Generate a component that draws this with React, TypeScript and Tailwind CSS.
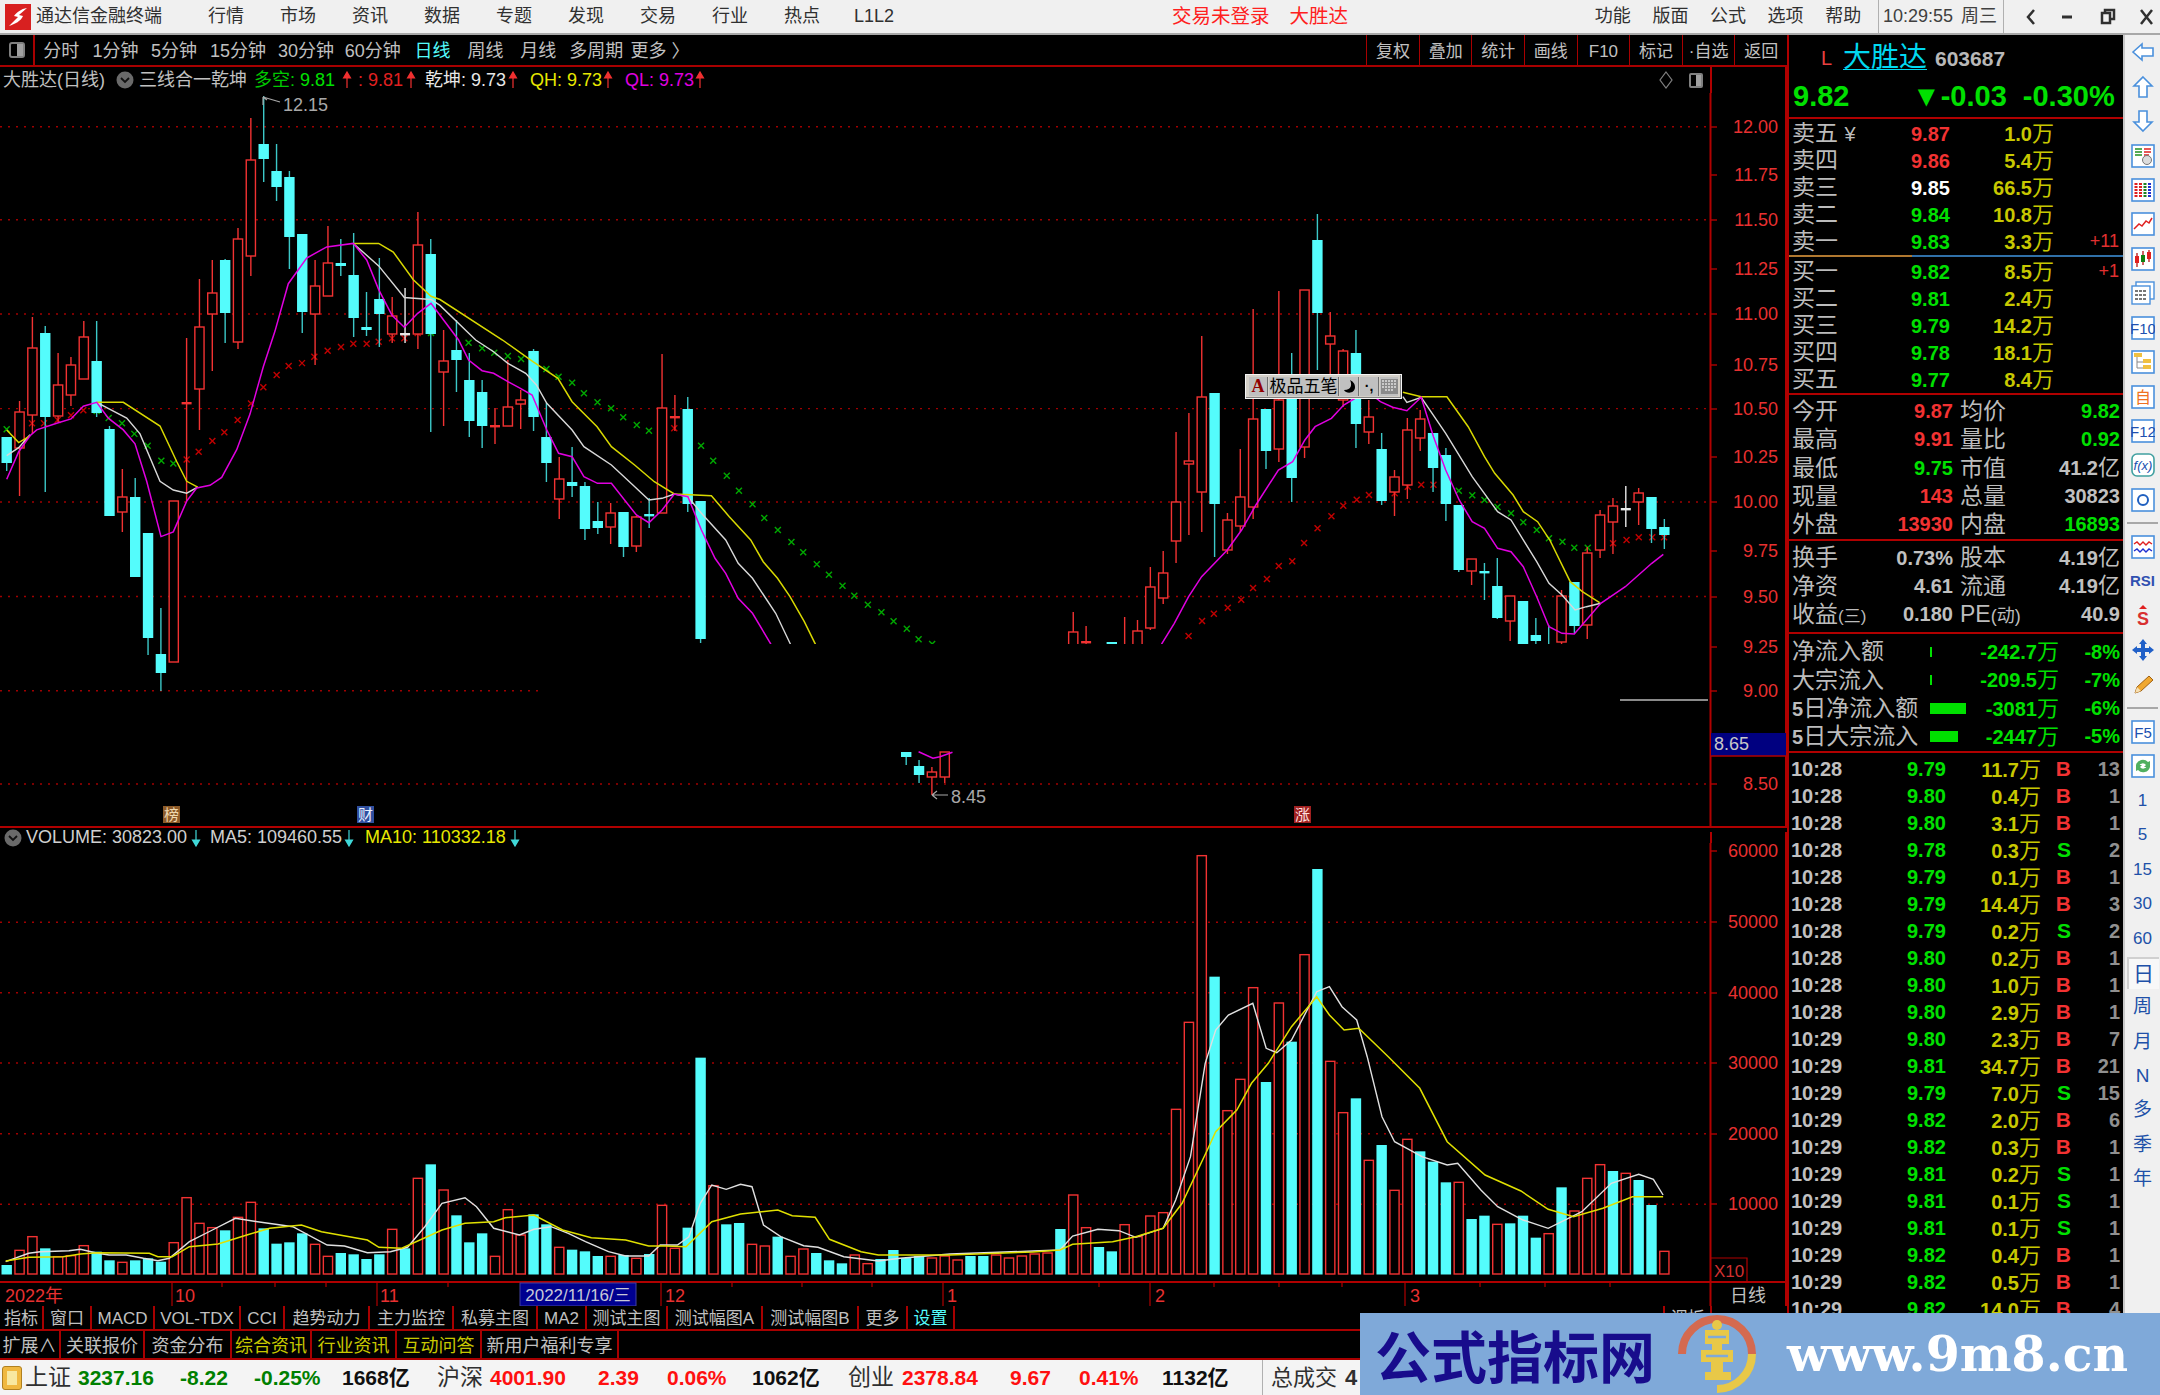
import React from "react";

// crop coordinates -> page coordinates
type Map = (x: number, y: number) => [number, number];
const zA: Map = (x, y) => [x / 3, 90 + y / 2.53];
const zB: Map = (x, y) => [440 + x / 2.8, 340 + y / 3];
const zC: Map = (x, y) => [1060 + x / 2.45, 200 + y / 3];
const zD: Map = (x, y) => [x / 1.742, 1040 + y / 3];
const zE: Map = (x, y) => [1060 + x / 2.376, 840 + y / 3];

const line = (...parts: [Map, number[]][]) =>
  parts
    .flatMap(([m, raw]) => {
      const out: string[] = [];
      for (let i = 0; i < raw.length; i += 2) {
        const [x, y] = m(raw[i], raw[i + 1]);
        out.push(`${x.toFixed(1)},${y.toFixed(1)}`);
      }
      return out;
    })
    .join(" ");

const cx = (i: number) => 6.7 + 12.85 * i;

// i, colour (c cyan, r red, w white), body top, body bottom, wick top, wick bottom
const candles: [number, string, number, number, number, number][] = [
  [0, "c", 437, 463, 437, 471], [1, "r", 412, 448, 401, 496], [2, "r", 348, 415, 317, 434], [3, "c", 333, 417, 326, 492],
  [4, "r", 385, 416, 353, 422], [5, "r", 365, 395, 357, 406], [6, "r", 337, 379, 321, 379], [7, "c", 361, 413, 321, 417],
  [8, "c", 429, 516, 426, 516], [9, "r", 497, 512, 469, 532], [10, "c", 497, 577, 478, 577], [11, "c", 533, 638, 533, 655],
  [12, "c", 654, 673, 608, 691], [13, "r", 501, 662, 501, 662], [14, "r", 403, 404, 338, 501], [15, "r", 327, 389, 279, 430],
  [16, "r", 293, 314, 260, 371], [17, "c", 260, 313, 259, 343], [18, "r", 239, 342, 228, 349], [19, "r", 160, 256, 118, 276],
  [20, "c", 144, 159, 96, 182], [21, "c", 171, 187, 144, 201], [22, "c", 177, 237, 171, 269], [23, "c", 234, 312, 234, 333],
  [24, "r", 286, 314, 260, 365], [25, "r", 263, 296, 226, 296], [26, "c", 263, 266, 239, 276], [27, "c", 275, 318, 233, 337],
  [28, "c", 327, 330, 292, 336], [29, "c", 299, 314, 258, 347], [30, "r", 316, 334, 297, 343], [31, "w", 334, 335, 288, 343],
  [32, "r", 245, 334, 212, 349], [33, "c", 254, 334, 239, 432], [34, "r", 361, 372, 330, 426], [35, "c", 350, 360, 320, 392],
  [36, "c", 380, 421, 353, 437], [37, "c", 392, 426, 380, 448], [38, "r", 426, 427, 408, 444], [39, "r", 407, 426, 360, 426],
  [40, "r", 400, 404, 390, 429], [41, "c", 351, 417, 349, 431], [42, "c", 437, 463, 403, 482], [43, "r", 479, 499, 457, 519],
  [44, "c", 482, 486, 447, 497], [45, "c", 486, 529, 482, 540], [46, "c", 521, 528, 502, 534], [47, "r", 513, 527, 503, 544],
  [48, "c", 512, 547, 512, 557], [49, "r", 517, 546, 516, 552], [50, "c", 515, 516, 498, 528], [51, "r", 408, 513, 354, 513],
  [52, "r", 417, 418, 395, 431], [53, "c", 409, 504, 397, 512], [54, "c", 501, 639, 501, 643],
  [70, "c", 752, 757, 752, 765], [71, "c", 766, 775, 760, 783], [72, "r", 772, 777, 767, 795], [73, "r", 752, 777, 752, 783],
  [83, "r", 632, 660, 612, 660], [84, "r", 642, 643, 626, 660], [86, "c", 642, 660, 642, 660], [87, "r", 660, 661, 617, 660],
  [88, "r", 631, 660, 620, 660], [89, "r", 587, 628, 567, 630], [90, "r", 573, 598, 551, 604], [91, "r", 502, 541, 432, 563],
  [92, "r", 461, 464, 413, 535], [93, "r", 397, 492, 336, 532], [94, "c", 393, 504, 393, 557], [95, "r", 520, 550, 513, 554],
  [96, "r", 497, 526, 449, 532], [97, "r", 419, 507, 309, 519], [98, "c", 409, 451, 409, 469], [99, "r", 400, 449, 291, 462],
  [100, "c", 390, 478, 353, 502], [101, "r", 290, 447, 290, 458], [102, "c", 240, 313, 214, 370], [103, "r", 336, 344, 312, 390],
  [104, "r", 351, 400, 349, 407], [105, "c", 353, 424, 330, 448], [106, "r", 417, 432, 400, 444], [107, "c", 449, 501, 433, 505],
  [108, "r", 477, 492, 470, 516], [109, "r", 430, 485, 418, 499], [110, "r", 419, 438, 410, 451], [111, "c", 433, 468, 433, 492],
  [112, "c", 455, 504, 448, 521], [113, "c", 505, 570, 505, 572], [114, "r", 559, 571, 559, 585], [115, "c", 572, 574, 563, 600],
  [116, "c", 586, 618, 558, 619], [117, "r", 596, 621, 596, 641], [118, "c", 601, 660, 601, 660], [119, "c", 635, 641, 618, 660],
  [120, "c", 660, 661, 625, 660], [121, "r", 596, 642, 590, 660], [122, "c", 582, 626, 582, 633], [123, "r", 553, 625, 547, 639],
  [124, "r", 515, 550, 510, 558], [125, "r", 506, 522, 498, 554], [126, "w", 509, 510, 486, 527], [127, "r", 493, 502, 488, 525],
  [128, "c", 497, 529, 497, 543], [129, "c", 527, 535, 519, 549],
];

const crossRed: [Map, number[]][] = [
  [zA, [56, 855, 96, 843, 132, 843, 173, 835, 213, 823, 250, 810, 560, 935, 596, 915, 637, 888, 673, 866, 713, 835, 753, 793, 790, 752, 830, 721, 866, 698, 906, 691, 943, 675, 983, 660, 1023, 650, 1060, 642, 1100, 642, 1136, 637, 1176, 628, 1213, 628, 1253, 615]],
  [zB, [622, 268, 656, 265]],
  [zC, [315, 1308, 348, 1263, 377, 1241, 411, 1223, 444, 1199, 473, 1164, 507, 1137, 536, 1098, 569, 1084, 598, 1029, 631, 985, 665, 949, 694, 917, 727, 899, 757, 885, 820, 880, 852, 860, 885, 854, 915, 854, 1326, 1040, 1355, 1030, 1388, 1020, 1418, 1012, 1451, 1012, 1480, 1012]],
];
const crossGreen: [Map, number[]][] = [
  [zA, [20, 858, 290, 812, 326, 830, 366, 843, 403, 870, 443, 900, 484, 938, 520, 945, 1293, 615]],
  [zB, [80, 8, 118, 25, 152, 38, 190, 48, 227, 57, 262, 68, 298, 87, 332, 110, 370, 128, 403, 160, 441, 187, 479, 205, 513, 232, 551, 255, 585, 272, 694, 277, 731, 317, 765, 362, 803, 407, 837, 452, 875, 493, 908, 534, 946, 570, 984, 606, 1017, 637, 1055, 673, 1089, 704, 1127, 737, 1160, 767, 1198, 794, 1236, 817, 1270, 844, 1307, 866, 1340, 898, 1378, 912]],
  [zC, [789, 885, 947, 854, 977, 872, 1010, 886, 1040, 900, 1072, 921, 1105, 940, 1135, 967, 1168, 990, 1198, 1015, 1231, 1025, 1260, 1043, 1293, 1043]],
];

const magenta = [
  line([zA, [20, 985, 56, 915, 90, 875, 110, 860, 170, 843, 213, 832, 250, 800, 290, 790, 325, 830, 370, 860, 405, 895, 440, 990, 483, 1130, 520, 1118, 560, 1040, 590, 1007, 630, 1000, 665, 980, 710, 910, 750, 820, 790, 700, 825, 610, 865, 490, 920, 425, 980, 397, 1060, 388, 1100, 430, 1136, 505, 1176, 570, 1213, 600, 1253, 565, 1293, 540, 1320, 570]],
    [zB, [52, 0, 80, 60, 118, 92, 150, 100, 190, 125, 225, 145, 258, 165, 299, 270, 332, 340, 370, 350, 403, 410, 441, 430, 480, 430, 550, 525, 585, 548, 622, 510, 656, 462, 694, 470, 732, 570, 770, 655, 800, 700, 835, 775, 875, 820, 925, 910, 960, 980]]),
  line([zB, [1340, 1235, 1380, 1255, 1400, 1250, 1435, 1237]]),
  line([zC, [225, 1390, 250, 1330, 280, 1270, 315, 1190, 347, 1130, 410, 1050, 445, 990, 480, 915, 535, 810, 570, 785, 600, 720, 625, 680, 665, 655, 695, 615, 720, 597, 750, 570, 785, 605, 815, 622, 850, 632, 885, 592, 915, 710, 945, 810, 978, 900, 1010, 965, 1040, 985, 1072, 1045, 1105, 1055, 1135, 1100, 1168, 1190, 1198, 1280, 1230, 1300, 1260, 1302, 1325, 1210, 1385, 1160, 1450, 1090, 1478, 1063]]),
];
const white = [
  line([zA, [20, 925, 56, 905, 90, 872]]),
  line([zA, [290, 790, 380, 830, 420, 870, 480, 990, 520, 1012, 560, 1020, 593, 1005]]),
  line([zA, [1060, 388, 1136, 445, 1213, 525, 1293, 530, 1320, 545]],
    [zB, [100, 0, 150, 35, 190, 70, 240, 100, 270, 135, 299, 190, 370, 270, 403, 320, 480, 375, 540, 435, 585, 480, 622, 475, 656, 462, 694, 470, 732, 520, 800, 600, 835, 670, 875, 715, 940, 820, 980, 910, 1010, 980]]),
  line([zC, [840, 590, 850, 607, 885, 592, 945, 700, 1010, 830, 1072, 935, 1105, 960, 1168, 1085, 1198, 1150, 1230, 1185, 1262, 1230, 1290, 1220, 1325, 1210]]),
];
const yellow = [
  line([zA, [20, 860, 56, 892, 90, 875]]),
  line([zA, [290, 790, 370, 790, 480, 850, 530, 940, 560, 990, 593, 1005]]),
  line([zA, [1060, 388, 1136, 388, 1180, 410, 1240, 480, 1293, 522, 1320, 530]],
    [zB, [175, 0, 260, 65, 330, 115, 370, 185, 440, 260, 480, 320, 545, 375, 600, 425, 656, 462, 760, 467, 810, 530, 870, 600, 905, 665, 945, 715, 980, 770, 1020, 845, 1050, 910, 1080, 980]]),
  line([zC, [840, 577, 885, 590, 948, 590, 1000, 680, 1040, 770, 1065, 820, 1110, 885, 1135, 935, 1170, 965, 1200, 1020, 1250, 1145, 1280, 1175, 1322, 1208]]),
];

const volTopsA = [675, 631, 590, 625, 650, 647, 617, 635, 661, 667, 661, 655, 665, 608, 473, 550, 563, 571, 532, 487, 565, 611, 607, 580, 613, 649, 639, 643, 657, 643, 568, 625, 415, 373, 450, 526, 607, 580, 649, 509, 585, 523, 553, 622, 629, 634, 648, 649, 645, 655, 642, 496, 625, 563, 53, 437, 553, 549, 613, 618, 590, 649, 627, 639, 661, 670, 645, 671, 657, 630];
const volTopsB = [1258, 1256, 1258, 1256, 1260, 1256, 1256, 1255, 1258, 1256, 1254, 1253, 1229];
const volTopsC = [1065, 1163, 1221, 1234, 1154, 1190, 1128, 1118, 808, 547, 47, 410, 812, 718, 443, 726, 489, 605, 344, 87, 664, 818, 775, 961, 915, 1051, 898, 934, 965, 1027, 1027, 1137, 1127, 1153, 1150, 1127, 1193, 1181, 1042, 1113, 1015, 974, 993, 1000, 1020, 1095, 1234];
const volTops = [...volTopsA.map((v) => 1040 + v / 3), ...volTopsB, ...volTopsC.map((v) => 840 + v / 3)];
const volKinds =
  "crrcrrrccrcccrrrrcrrccccrrccccrcrcrcccrrrccrcccrcrcrrccrccrrcrrcccrrcc" +
  "ccrrrccrrrrrc" +
  "rrccrrrrrrrcrrrcrcrcrrcrcrrcccrccrcccrcrrrcrcc";

const volWhite = line(
  [zD, [10, 665, 50, 640, 70, 635, 120, 632, 140, 628, 170, 640, 190, 645, 220, 645, 250, 655, 275, 662, 295, 655, 330, 605, 370, 570, 410, 535, 440, 543, 480, 553, 510, 560, 570, 615, 600, 618, 640, 638, 680, 635, 710, 622, 740, 560, 770, 490, 810, 473, 830, 500, 860, 565, 905, 585, 930, 568, 960, 560, 990, 580, 1020, 605, 1060, 635, 1090, 648, 1130, 648, 1150, 615, 1180, 615, 1200, 590, 1220, 490, 1240, 435, 1265, 448, 1290, 433, 1310, 440, 1330, 555, 1360, 590, 1400, 617, 1425, 622, 1470, 650, 1530, 663, 1568, 655]],
  [(x, y) => [x, y], [950, 1254, 1033, 1251]],
  [zE, [0, 1230, 30, 1188, 90, 1168, 140, 1172, 180, 1192, 245, 1165, 275, 1080, 310, 950, 345, 670, 370, 570, 400, 525, 458, 490, 490, 625, 515, 638, 550, 600, 610, 455, 640, 440, 670, 500, 705, 540, 730, 650, 765, 830, 795, 905, 860, 950, 920, 975, 945, 970, 1000, 1050, 1040, 1100, 1100, 1140, 1160, 1165, 1240, 1115, 1310, 1030, 1375, 1003, 1410, 1018, 1433, 1065]]
);
const volYellow = line(
  [zD, [10, 663, 50, 652, 110, 650, 140, 642, 170, 638, 260, 640, 275, 650, 300, 650, 330, 620, 380, 612, 430, 585, 470, 565, 525, 555, 560, 575, 640, 600, 660, 622, 700, 625, 770, 570, 810, 550, 860, 545, 880, 533, 930, 525, 980, 570, 1030, 593, 1090, 600, 1130, 618, 1160, 618, 1195, 620, 1240, 545, 1290, 522, 1355, 510, 1380, 527, 1420, 532, 1445, 598, 1500, 635, 1530, 645, 1568, 645]],
  [(x, y) => [x, y], [950, 1255, 1033, 1252]],
  [zE, [0, 1230, 30, 1213, 125, 1205, 180, 1190, 245, 1165, 290, 1090, 350, 930, 370, 875, 420, 810, 455, 730, 495, 670, 550, 560, 610, 470, 640, 525, 675, 570, 710, 565, 780, 650, 855, 745, 920, 905, 1010, 1005, 1095, 1053, 1160, 1108, 1220, 1130, 1290, 1105, 1360, 1070, 1433, 1070]]
);

const CYAN = "#54fcfc";
const RED = "#f23232";

const Crosses = ({ sets, color }: { sets: [Map, number[]][]; color: string }) => (
  <g stroke={color} strokeWidth="1.4" fill="none">
    {sets.flatMap(([m, raw]) => {
      const out = [];
      for (let i = 0; i < raw.length; i += 2) {
        const [x, y] = m(raw[i], raw[i + 1]);
        out.push(<path key={`${x}-${y}`} d={`M${x - 3} ${y - 3}L${x + 3} ${y + 3}M${x + 3} ${y - 3}L${x - 3} ${y + 3}`} />);
      }
      return out;
    })}
  </g>
);

const Candle = ({ c }: { c: (typeof candles)[number] }) => {
  const [i, kind, top, bottom, wt, wb] = c;
  const x = cx(i);
  const stroke = kind === "c" ? "#3cc8c8" : kind === "w" ? "#e8e8e8" : RED;
  const doji = bottom - top < 3;
  return (
    <g>
      <line x1={x} x2={x} y1={wt} y2={wb} stroke={stroke} strokeWidth="1.4" />
      {doji ? (
        <rect x={x - 5} y={top - 1} width="10" height="2.4" fill={kind === "c" ? CYAN : stroke} />
      ) : kind === "c" ? (
        <rect x={x - 5.2} y={top} width="10.4" height={bottom - top} fill={CYAN} />
      ) : (
        <rect x={x - 4.6} y={top} width="9.2" height={bottom - top} fill="#000" stroke={stroke} strokeWidth="1.4" />
      )}
    </g>
  );
};

const MainChart = () => {
  const grid = [126.8, 219.7, 314, 408.6, 502, 596.5, 690.8, 784];
  const labels: [string, number][] = [["12.00", 127], ["11.75", 175], ["11.50", 220], ["11.25", 269], ["11.00", 314], ["10.75", 365], ["10.50", 409], ["10.25", 457], ["10.00", 502], ["9.75", 551], ["9.50", 597], ["9.25", 647], ["9.00", 691], ["8.50", 784]];
  return (
    <svg width="1787" height="733" viewBox="0 93 1787 733" className="block">
      {grid.map((y) => (
        <line key={y} x1="0" x2="1710" y1={y} y2={y} stroke="#a00000" strokeWidth="1.4" strokeDasharray="2 6" />
      ))}
      <Crosses sets={crossRed} color="#c00000" />
      <Crosses sets={crossGreen} color="#00a800" />
      {candles.map((c) => <Candle key={c[0]} c={c} />)}
      {white.map((p, i) => <polyline key={i} points={p} fill="none" stroke="#d8d8d8" strokeWidth="1.4" />)}
      {yellow.map((p, i) => <polyline key={i} points={p} fill="none" stroke="#d8d800" strokeWidth="1.5" />)}
      {magenta.map((p, i) => <polyline key={i} points={p} fill="none" stroke="#e000e0" strokeWidth="1.5" />)}
      {/* the blacked out band in the reference */}
      <rect x="538" y="644" width="1172" height="106" fill="#000" />
      <line x1="1620" x2="1708" y1="700" y2="700" stroke="#b8b8b8" strokeWidth="1.4" />
      <path d="M263 105V97M263 97L280 102M263 97l4 3" stroke="#a8a8a8" strokeWidth="1.2" fill="none" />
      <text x="283" y="111" fontSize="18" fill="#a8a8a8">12.15</text>
      <path d="M932 795H948M932 795l5-4M932 795l5 4" stroke="#a8a8a8" strokeWidth="1.2" fill="none" />
      <text x="951" y="803" fontSize="18" fill="#a8a8a8">8.45</text>
      <rect x="163" y="806" width="17" height="17" fill="#8c5a28" />
      <text x="164" y="820" fontSize="15" fill="#f0d8b0">榜</text>
      <rect x="357" y="806" width="17" height="17" fill="#2f4f9f" />
      <text x="358" y="820" fontSize="15" fill="#e8f0ff">财</text>
      <rect x="1294" y="806" width="17" height="17" fill="#a02020" />
      <text x="1295" y="820" fontSize="15" fill="#ffe0e0">涨</text>
      <line x1="1710.5" x2="1710.5" y1="93" y2="826" stroke="#b00000" strokeWidth="2" />
      <line x1="1786" x2="1786" y1="93" y2="826" stroke="#b00000" strokeWidth="2" />
      {labels.map(([t, y]) => (
        <g key={t}>
          <line x1="1711" x2="1717" y1={y} y2={y} stroke="#b00000" strokeWidth="1.4" />
          <text x="1778" y={y + 6} fontSize="18" fill="#e83030" textAnchor="end">{t}</text>
        </g>
      ))}
      <rect x="1711" y="733" width="75" height="23" fill="#000080" />
      <line x1="1711" x2="1786" y1="756" y2="756" stroke="#b00000" strokeWidth="1.4" />
      <text x="1714" y="750" fontSize="18" fill="#c8c8c8">8.65</text>
    </svg>
  );
};

const VolumeChart = () => {
  const grid = [922.3, 992.7, 1063, 1133.7, 1204.3];
  const labels: [string, number][] = [["60000", 851], ["50000", 922], ["40000", 993], ["30000", 1063], ["20000", 1134], ["10000", 1204]];
  const months: [string, number][] = [["2022年", 5], ["10", 175], ["11", 380], ["12", 665], ["1", 947], ["2", 1155], ["3", 1410]];
  const minor = [222, 275, 326, 448, 732, 802, 872, 1099, 1214, 1279, 1342, 1480, 1545, 1610];
  return (
    <svg width="1787" height="463" viewBox="0 843 1787 463" className="block">
      {grid.map((y) => (
        <line key={y} x1="0" x2="1710" y1={y} y2={y} stroke="#a00000" strokeWidth="1.4" strokeDasharray="2 6" />
      ))}
      {volTops.map((top, i) => {
        const x = cx(i);
        return volKinds[i] === "c" ? (
          <rect key={i} x={x - 5.2} y={top} width="10.4" height={1274.5 - top} fill={CYAN} />
        ) : (
          <rect key={i} x={x - 4.6} y={top} width="9.2" height={1274 - top} fill="#000" stroke={RED} strokeWidth="1.4" />
        );
      })}
      <polyline points={volWhite} fill="none" stroke="#e0e0e0" strokeWidth="1.4" />
      <polyline points={volYellow} fill="none" stroke="#e0e000" strokeWidth="1.5" />
      <line x1="0" x2="1787" y1="1282" y2="1282" stroke="#b00000" strokeWidth="2" />
      <line x1="1710.5" x2="1710.5" y1="843" y2="1306" stroke="#b00000" strokeWidth="2" />
      <line x1="1786" x2="1786" y1="843" y2="1306" stroke="#b00000" strokeWidth="2" />
      {labels.map(([t, y]) => (
        <g key={t}>
          <line x1="1711" x2="1717" y1={y} y2={y} stroke="#b00000" strokeWidth="1.4" />
          <text x="1778" y={y + 6} fontSize="18" fill="#e83030" textAnchor="end">{t}</text>
        </g>
      ))}
      <path d="M1711 1258H1747V1282" fill="none" stroke="#b00000" strokeWidth="1.2" />
      <text x="1714" y="1277" fontSize="17" fill="#d03030">X10</text>
      {minor.map((x) => <line key={x} x1={x} x2={x} y1="1282" y2="1287" stroke="#b00000" strokeWidth="1.2" />)}
      {[172, 377, 661, 943, 1150, 1405].map((x) => <line key={x} x1={x} x2={x} y1="1282" y2="1306" stroke="#b00000" strokeWidth="1.2" />)}
      {months.map(([t, x]) => <text key={t} x={x} y="1302" fontSize="18" fill="#e83030">{t}</text>)}
      <rect x="520" y="1283" width="116" height="23" fill="#000090" stroke="#4040a0" />
      <text x="578" y="1301" fontSize="17" fill="#c8c8d8" textAnchor="middle">2022/11/16/三</text>
      <text x="1748" y="1302" fontSize="18" fill="#c0c0c0" textAnchor="middle">日线</text>
    </svg>
  );
};

const UpArrow = () => (
  <svg width="10" height="18" viewBox="0 0 10 18" className="shrink-0">
    <path d="M5 17V2M1.5 7L5 1l3.500 6z" stroke="#f03030" fill="#f03030" strokeWidth="1.2" />
  </svg>
);
const DownArrow = () => (
  <svg width="10" height="18" viewBox="0 0 10 18" className="shrink-0">
    <path d="M5 1V16M1.500 11L5 17l3.500-6z" stroke="#40d8d8" fill="#40d8d8" strokeWidth="1.2" />
  </svg>
);
const ChevronDot = () => (
  <svg width="18" height="18" viewBox="0 0 18 18" className="shrink-0">
    <circle cx="9" cy="9" r="8.500" fill="#6a6a6a" />
    <path d="M5 7l4 4 4-4" stroke="#111" strokeWidth="1.800" fill="none" />
  </svg>
);

const Tool = ({ w, cls, children }: { w: string; cls?: string; children: React.ReactNode }) => (
  <div className={`${w} shrink-0 text-center whitespace-nowrap ${cls ?? "text-[#c0c0c0]"}`}>{children}</div>
);

const Toolbar = () => (
  <div className="h-[32px] flex items-center border-b-2 border-[#a80000] text-[18px] shrink-0">
    <div className="w-[35px] h-full border-r-2 border-[#a80000] flex items-center justify-center shrink-0">
      <div className="w-[16px] h-[16px] rounded-[3px] border-2 border-[#808080] flex justify-end">
        <div className="w-[6px] bg-[#a0a0a0]" />
      </div>
    </div>
    <Tool w="w-[52.5px] pt-[3px]">分时</Tool>
    <Tool w="w-[56px] pt-[3px]">1分钟</Tool>
    <Tool w="w-[61px] pt-[3px]">5分钟</Tool>
    <Tool w="w-[67px] pt-[3px]">15分钟</Tool>
    <Tool w="w-[69px] pt-[3px]">30分钟</Tool>
    <Tool w="w-[64.500px] pt-[3px]">60分钟</Tool>
    <Tool w="w-[55px] pt-[3px]" cls="text-[#54fcfc]">日线</Tool>
    <Tool w="w-[51px] pt-[3px]">周线</Tool>
    <Tool w="w-[54.500px] pt-[3px]">月线</Tool>
    <Tool w="w-[61.500px] pt-[3px]">多周期</Tool>
    <Tool w="w-[66px] pt-[3px]">更多 〉</Tool>
    <div className="ml-auto flex h-full">
      {["复权", "叠加", "统计", "画线", "F10", "标记", "·自选", "返回"].map((t) => (
        <div key={t} className="w-[52.600px] h-full border-l border-[#a80000] flex items-center justify-center text-[#c0c0c0] text-[17px] pt-[3px]">{t}</div>
      ))}
    </div>
  </div>
);

const ChartHeader = () => (
  <div className="h-[26px] flex items-center text-[18px] text-[#c0c0c0] shrink-0 whitespace-nowrap">
    <div className="w-[116px] pl-[3px] shrink-0">大胜达(日线)</div>
    <ChevronDot />
    <div className="w-[120px] pl-[5px] shrink-0">三线合一乾坤</div>
    <div className="w-[88px] text-[#00c800] shrink-0">多空: <span className="text-[#00e000]">9.81</span></div>
    <UpArrow />
    <div className="w-[54px] pl-[6px] text-[#e02020] shrink-0">: 9.81</div>
    <UpArrow />
    <div className="w-[92px] pl-[9px] text-[#e8e8e8] shrink-0">乾坤: 9.73</div>
    <UpArrow />
    <div className="w-[85px] pl-[12px] text-[#e8e800] shrink-0">QH: 9.73</div>
    <UpArrow />
    <div className="w-[82px] pl-[12px] text-[#e000e0] shrink-0">QL: 9.73</div>
    <UpArrow />
    <div className="ml-auto w-[51px] flex items-center gap-[16px] shrink-0">
      <svg width="14" height="18" viewBox="0 0 14 18" className="shrink-0"><path d="M7 1L13 9 7 17 1 9z" fill="none" stroke="#808080" strokeWidth="1.200" /></svg>
      <div className="w-[14px] h-[15px] rounded-[2px] border-2 border-[#808080] flex justify-end shrink-0"><div className="w-[5px] bg-[#a0a0a0]" /></div>
    </div>
    <div className="w-[77px] h-full border-l-2 border-r-2 border-[#b00000] shrink-0" />
  </div>
);

const VolumeHeader = () => (
  <div className="h-[17px] flex items-center text-[18px] whitespace-nowrap shrink-0 border-t-2 border-[#b00000] pl-[4px] pt-[4px]">
    <div className="w-[22px] shrink-0"><ChevronDot /></div>
    <div className="w-[165px] text-[#d0d0d0] shrink-0">VOLUME: 30823.00</div>
    <DownArrow />
    <div className="w-[143px] pl-[9px] text-[#d0d0d0] shrink-0">MA5: 109460.55</div>
    <DownArrow />
    <div className="w-[156px] pl-[11px] text-[#e8e800] shrink-0">MA10: 110332.18</div>
    <DownArrow />
    <div className="ml-auto w-[77px] h-full border-l-2 border-r-2 border-[#b00000] shrink-0" />
  </div>
);

const ImeBar = () => (
  <div className="absolute left-[1245px] top-[281px] w-[157px] h-[25px] bg-[#d4d0c8] border border-[#f4f4f4] flex items-center gap-[1px] px-[3px] py-[2px] shadow-[inset_-1px_-1px_0_#808080]">
    <div className="w-[19px] h-full bg-[#c0c0c0] border-r border-[#707070] flex items-center justify-center text-[#900000] font-bold text-[18px] [font-family:'Liberation_Serif',serif]">A</div>
    <div className="w-[70px] h-full bg-[#c0c0c0] border-r border-[#707070] flex items-center justify-center text-black text-[17px]">极品五笔</div>
    <div className="w-[19px] h-full bg-[#c0c0c0] border-r border-[#707070] flex items-center justify-center">
      <svg width="13" height="14" viewBox="0 0 13 14"><path d="M7 0C9 4 9 10 1 10 3 14 12 14 12 7 12 3 9 1 7 0z" fill="#000" /></svg>
    </div>
    <div className="w-[19px] h-full bg-[#c0c0c0] border-r border-[#707070] flex items-center justify-center text-black text-[14px] font-bold">·,</div>
    <div className="flex-1 h-full bg-[#c0c0c0] flex items-center justify-center">
      <svg width="17" height="15" viewBox="0 0 17 15"><rect width="17" height="15" fill="#8a8a8a" /><path d="M1 2H16M1 5H16M1 8H16M4 11H13" stroke="#e0e0e0" strokeWidth="1.500" strokeDasharray="2 1" /></svg>
    </div>
  </div>
);

const TabCell = ({ w, cls, children }: { w: string; cls?: string; children: React.ReactNode }) => (
  <div className={`${w} h-full border-r-2 border-[#a80000] flex items-center justify-center shrink-0 whitespace-nowrap pt-[3px] ${cls ?? "text-[#c0c0c0]"}`}>{children}</div>
);

const Tabs = () => (
  <>
    <div className="h-[25px] flex border-b-2 border-[#a80000] text-[17px] shrink-0 overflow-hidden">
      <TabCell w="w-[44px]">指标</TabCell>
      <TabCell w="w-[48px]">窗口</TabCell>
      <TabCell w="w-[63px]">MACD</TabCell>
      <TabCell w="w-[86px]">VOL-TDX</TabCell>
      <TabCell w="w-[44px]">CCI</TabCell>
      <TabCell w="w-[85px]">趋势动力</TabCell>
      <TabCell w="w-[84px]">主力监控</TabCell>
      <TabCell w="w-[84px]">私募主图</TabCell>
      <TabCell w="w-[49px]">MA2</TabCell>
      <TabCell w="w-[81px]">测试主图</TabCell>
      <TabCell w="w-[95px]">测试幅图A</TabCell>
      <TabCell w="w-[96px]">测试幅图B</TabCell>
      <TabCell w="w-[49px]">更多</TabCell>
      <TabCell w="w-[47px]" cls="text-[#54fcfc]">设置</TabCell>
      <div className="w-[710px] h-full shrink-0 border-r-2 border-[#a80000]" />
      <TabCell w="w-[47px]">调板</TabCell>
      <div className="flex-1" />
    </div>
    <div className="h-[29px] flex border-b-2 border-[#a80000] text-[18px] shrink-0">
      <TabCell w="w-[61px]">扩展∧</TabCell>
      <TabCell w="w-[84px]">关联报价</TabCell>
      <TabCell w="w-[87px]">资金分布</TabCell>
      <TabCell w="w-[80px]" cls="text-[#c8c800]">综合资讯</TabCell>
      <TabCell w="w-[85px]" cls="text-[#c8c800]">行业资讯</TabCell>
      <TabCell w="w-[85px]" cls="text-[#c8c800]">互动问答</TabCell>
      <TabCell w="w-[137px]">新用户福利专享</TabCell>
    </div>
  </>
);

const Label = ({ children }: { children: React.ReactNode }) => <span className="text-[23px] text-[#bcbcbc] whitespace-nowrap">{children}</span>;
const Wan = ({ children }: { children: React.ReactNode }) => (
  <span className="font-bold text-[20px]">{children}<span className="text-[22px] font-normal">万</span></span>
);

const priceColor = (p: number) => (p > 9.85 ? "text-[#f23232]" : p < 9.85 ? "text-[#00e000]" : "text-white");

const QuoteRow = ({ label, price, vol, extra }: { label: React.ReactNode; price: number; vol: string; extra?: string }) => (
  <div className="h-[27px] flex items-center">
    <div className="w-[122px] pl-[3px] shrink-0"><Label>{label}</Label></div>
    <div className={`w-[42px] font-bold text-[20px] shrink-0 ${priceColor(price)}`}>{price.toFixed(2)}</div>
    <div className="w-[101px] text-right text-[#c8c800] shrink-0"><Wan>{vol}</Wan></div>
    <div className="w-[65px] text-right text-[#e03030] text-[18px] shrink-0">{extra}</div>
  </div>
);

const StatRow = ({ a, av, ac, b, bv, bc }: { a: React.ReactNode; av: string; ac: string; b: React.ReactNode; bv: React.ReactNode; bc: string }) => (
  <div className="h-[28.300px] flex items-center">
    <div className="w-[171px] pl-[3px] pr-[7px] flex justify-between items-center shrink-0">
      <Label>{a}</Label>
      <span className={`font-bold text-[20px] ${ac}`}>{av}</span>
    </div>
    <div className="w-[160px] flex justify-between items-center shrink-0">
      <Label>{b}</Label>
      <span className={`font-bold text-[20px] ${bc}`}>{bv}</span>
    </div>
  </div>
);

const G = "text-[#00e000]";
const R = "text-[#f23232]";
const W = "text-[#c0c0c0]";

const FlowRow = ({ label, bar, val, pct }: { label: React.ReactNode; bar: string; val: string; pct: string }) => (
  <div className="h-[28.300px] flex items-center">
    <div className="w-[141px] pl-[3px] shrink-0 overflow-hidden">{label}</div>
    <div className="w-[44px] shrink-0 flex items-center"><div className={`${bar} bg-[#00e000]`} /></div>
    <div className="w-[85px] text-right text-[#00e000] shrink-0 whitespace-nowrap"><span className="font-bold text-[20px]">{val}<span className="text-[22px] font-normal">万</span></span></div>
    <div className="w-[61px] text-right text-[#00e000] font-bold text-[20px] shrink-0">{pct}</div>
  </div>
);

const trades: [string, number, string, string, number][] = [
  ["10:28", 9.79, "11.7", "B", 13], ["10:28", 9.8, "0.4", "B", 1], ["10:28", 9.8, "3.1", "B", 1], ["10:28", 9.78, "0.3", "S", 2],
  ["10:28", 9.79, "0.1", "B", 1], ["10:28", 9.79, "14.4", "B", 3], ["10:28", 9.79, "0.2", "S", 2], ["10:28", 9.8, "0.2", "B", 1],
  ["10:28", 9.8, "1.0", "B", 1], ["10:28", 9.8, "2.9", "B", 1], ["10:29", 9.8, "2.3", "B", 7], ["10:29", 9.81, "34.7", "B", 21],
  ["10:29", 9.79, "7.0", "S", 15], ["10:29", 9.82, "2.0", "B", 6], ["10:29", 9.82, "0.3", "B", 1], ["10:29", 9.81, "0.2", "S", 1],
  ["10:29", 9.81, "0.1", "S", 1], ["10:29", 9.81, "0.1", "S", 1], ["10:29", 9.82, "0.4", "B", 1], ["10:29", 9.82, "0.5", "B", 1],
  ["10:29", 9.82, "14.0", "B", 4],
];

const Panel = () => (
  <div className="w-[336px] h-full border-l-2 border-[#b00000] shrink-0 flex flex-col overflow-hidden">
    <div className="h-[84px] border-b-2 border-[#b00000] shrink-0">
      <div className="h-[41px] flex items-end pl-[32px] whitespace-nowrap">
        <span className="text-[#e84040] text-[20px] w-[22px] mb-[3px]">L</span>
        <span className="text-[#00d8f0] text-[28px] leading-[36px] underline underline-offset-2 decoration-1">大胜达</span>
        <span className="text-[#b8b8b8] text-[21px] font-bold ml-[8px] mb-[2px]">603687</span>
      </div>
      <div className="h-[41px] flex items-center pl-[4px] pt-[1px] text-[#00e000] font-bold text-[29px] whitespace-nowrap">
        <span className="w-[119px]">9.82</span>
        <span>▼-0.03</span>
        <span className="ml-[16px]">-0.30%</span>
      </div>
    </div>
    <div className="pt-[1px] shrink-0">
      <QuoteRow label={<>卖五 <span className="text-[20px]">¥</span></>} price={9.87} vol="1.0" />
      <QuoteRow label="卖四" price={9.86} vol="5.4" />
      <QuoteRow label="卖三" price={9.85} vol="66.5" />
      <QuoteRow label="卖二" price={9.84} vol="10.8" />
      <QuoteRow label="卖一" price={9.83} vol="3.3" extra="+11" />
    </div>
    <div className="h-[2px] flex shrink-0"><div className="w-[123px] bg-[#b07830]" /><div className="flex-1 bg-[#3070a8]" /></div>
    <div className="border-b-2 border-[#b00000] pt-[1px] shrink-0">
      <QuoteRow label="买一" price={9.82} vol="8.5" extra="+1" />
      <QuoteRow label="买二" price={9.81} vol="2.4" />
      <QuoteRow label="买三" price={9.79} vol="14.2" />
      <QuoteRow label="买四" price={9.78} vol="18.1" />
      <QuoteRow label="买五" price={9.77} vol="8.4" />
    </div>
    <div className="border-b-2 border-[#b00000] pt-[2px] pb-[1px] shrink-0">
      <StatRow a="今开" av="9.87" ac={R} b="均价" bv="9.82" bc={G} />
      <StatRow a="最高" av="9.91" ac={R} b="量比" bv="0.92" bc={G} />
      <StatRow a="最低" av="9.75" ac={G} b="市值" bv={<>41.2<span className="text-[22px] font-normal">亿</span></>} bc={W} />
      <StatRow a="现量" av="143" ac={R} b="总量" bv="30823" bc={W} />
      <StatRow a="外盘" av="13930" ac={R} b="内盘" bv="16893" bc={G} />
    </div>
    <div className="border-b-2 border-[#b00000] pt-[2px] pb-[4px] shrink-0">
      <StatRow a="换手" av="0.73%" ac={W} b="股本" bv={<>4.19<span className="text-[22px] font-normal">亿</span></>} bc={W} />
      <StatRow a="净资" av="4.61" ac={W} b="流通" bv={<>4.19<span className="text-[22px] font-normal">亿</span></>} bc={W} />
      <StatRow a={<>收益<span className="text-[17px]">(三)</span></>} av="0.180" ac={W} b={<>PE<span className="text-[18px]">(动)</span></>} bv="40.9" bc={W} />
    </div>
    <div className="border-b-2 border-[#b00000] pt-[3px] shrink-0">
      <FlowRow label={<Label>净流入额</Label>} bar="w-[2px] h-[10px]" val="-242.7" pct="-8%" />
      <FlowRow label={<Label>大宗流入</Label>} bar="w-[2px] h-[10px]" val="-209.5" pct="-7%" />
      <FlowRow label={<Label><b className="text-[20px]">5</b>日净流入额</Label>} bar="w-[36px] h-[11px]" val="-3081" pct="-6%" />
      <FlowRow label={<Label><b className="text-[20px]">5</b>日大宗流入</Label>} bar="w-[28px] h-[11px]" val="-2447" pct="-5%" />
    </div>
    <div className="pt-[3px]">
      {trades.map(([t, p, v, s, n], i) => (
        <div key={i} className="h-[27px] flex items-center font-bold text-[20px]">
          <div className="w-[118px] pl-[2px] text-[#c0c0c0] shrink-0">{t}</div>
          <div className="w-[50px] text-[#00e000] shrink-0">{p.toFixed(2)}</div>
          <div className="w-[84px] text-right text-[#c8c800] shrink-0 whitespace-nowrap">{v}<span className="text-[22px] font-normal">万</span></div>
          <div className={`w-[30px] text-right shrink-0 font-bold text-[21px] ${s === "B" ? "text-[#f23232]" : "text-[#00e000]"}`}>{s}</div>
          <div className="w-[49px] text-right text-[#909090] shrink-0">{n}</div>
        </div>
      ))}
    </div>
  </div>
);

const Box = ({ children }: { children: React.ReactNode }) => (
  <svg width="24" height="24" viewBox="0 0 24 24">
    <rect x="1" y="1" width="22" height="22" fill="#fff" stroke="#4a90dc" strokeWidth="1.600" />
    {children}
  </svg>
);
const Plain = ({ children }: { children: React.ReactNode }) => <svg width="24" height="24" viewBox="0 0 24 24">{children}</svg>;

const railIcons: React.ReactNode[] = [
  <Plain key="l"><path d="M2 12L11 4V8H22V16H11V20Z" fill="#fff" stroke="#4a90dc" strokeWidth="1.600" /></Plain>,
  <Plain key="u"><path d="M12 2L21 11H16V22H8V11H3Z" fill="#fff" stroke="#4a90dc" strokeWidth="1.600" /></Plain>,
  <Plain key="d"><path d="M12 22L21 13H16V2H8V13H3Z" fill="#fff" stroke="#4a90dc" strokeWidth="1.600" /></Plain>,
  <Box key="t"><path d="M4 5H11M4 8H11M4 11H11" stroke="#209020" strokeWidth="1.500" /><path d="M13 5H20M13 8H20M13 11H18" stroke="#e02020" strokeWidth="1.500" /><circle cx="16" cy="16" r="4.500" fill="#ddd" stroke="#777" /></Box>,
  <Box key="g"><path d="M5 5V19M9.500 5V19" stroke="#e02020" strokeWidth="3" strokeDasharray="2 1" /><path d="M14 5V19" stroke="#208020" strokeWidth="3" strokeDasharray="2 1" /><path d="M18.500 5V19" stroke="#2030d0" strokeWidth="3" strokeDasharray="2 1" /></Box>,
  <Box key="c"><path d="M3 17L8 12 11 14 15 9 18 11 21 6" fill="none" stroke="#e02020" strokeWidth="1.500" /></Box>,
  <Box key="k"><path d="M6 6V20M12 4V18M18 3V15" stroke="#b00000" strokeWidth="1.200" /><rect x="4" y="9" width="4" height="7" fill="#e02020" /><rect x="10" y="8" width="4" height="7" fill="#108010" /><rect x="16" y="5" width="4" height="7" fill="#e02020" /></Box>,
  <Plain key="w"><rect x="5" y="1" width="18" height="17" fill="#fff" stroke="#4a90dc" strokeWidth="1.400" /><rect x="1" y="5" width="18" height="18" fill="#fff" stroke="#4a90dc" strokeWidth="1.400" /><path d="M4 10H16M4 14H16M4 18H16" stroke="#777" strokeWidth="1.800" strokeDasharray="3 1" /></Plain>,
  <Box key="f10"><text x="12" y="18" fontSize="15" textAnchor="middle" fill="#2050b0">F10</text></Box>,
  <Box key="tr"><path d="M6 7V18H12M6 12H12" stroke="#888" fill="none" /><rect x="3" y="3" width="8" height="4" fill="#f0c040" /><rect x="12" y="9" width="8" height="4" fill="#f0c040" /><rect x="12" y="15" width="8" height="4" fill="#f0c040" /></Box>,
  <Box key="zi"><text x="12" y="18" fontSize="16" textAnchor="middle" fill="#f07020">自</text></Box>,
  <Box key="f12"><text x="12" y="18" fontSize="15" textAnchor="middle" fill="#2050b0">F12</text></Box>,
  <Plain key="fx"><rect x="1" y="1" width="22" height="22" rx="5" fill="#fff" stroke="#40a0a0" strokeWidth="1.600" /><text x="12" y="17" fontSize="13" fontStyle="italic" textAnchor="middle" fill="#2050b0">f(x)</text></Plain>,
  <Box key="o"><circle cx="12" cy="12" r="5" fill="none" stroke="#2060c0" strokeWidth="2" /></Box>,
];
const railIcons2: React.ReactNode[] = [
  <Box key="wv"><path d="M3 9L6 7 9 10 12 7 15 10 18 7 21 9" fill="none" stroke="#e02020" strokeWidth="1.400" /><path d="M3 16L6 14 9 17 12 14 15 17 18 14 21 16" fill="none" stroke="#2030d0" strokeWidth="1.400" /></Box>,
  <span key="rsi" className="text-[15px] font-bold text-[#3050b0]">RSI</span>,
  <Plain key="s"><path d="M12 1L16 5H8Z" fill="#e02020" /><text x="12" y="21" fontSize="18" fontWeight="bold" textAnchor="middle" fill="#d83030">S</text></Plain>,
  <Plain key="mv"><path d="M12 1L16 6H14V10H18V8L23 12 18 16V14H14V18H16L12 23 8 18H10V14H6V16L1 12 6 8V10H10V6H8Z" fill="#2060c8" /></Plain>,
  <Plain key="pn"><path d="M4 20L6 14 18 3 22 7 10 18Z" fill="#f0a830" stroke="#a06010" /><path d="M4 20L6 14 10 18Z" fill="#f8e0b0" /></Plain>,
];

const RailItem = ({ children }: { children: React.ReactNode }) => (
  <div className="h-[34.450px] flex items-center justify-center shrink-0">{children}</div>
);
const RailSep = () => (
  <div className="h-[12.700px] flex items-center px-[2px] shrink-0"><div className="h-[2px] w-full bg-[#a8a8a8]" /></div>
);

const Rail = () => (
  <div className="w-[37px] h-full bg-[#f0f0f0] border-l-2 border-[#c8c8c8] shrink-0 flex flex-col text-[#2050a8] text-[17px]">
    {railIcons.map((n, i) => <RailItem key={i}>{n}</RailItem>)}
    <RailSep />
    {railIcons2.map((n, i) => <RailItem key={i}>{n}</RailItem>)}
    <RailSep />
    <RailItem><Box><text x="12" y="18" fontSize="15" textAnchor="middle" fill="#2050b0">F5</text></Box></RailItem>
    <RailItem>
      <Box><path d="M5 11a7 7 0 0 1 12-3l2-1v6h-6l2-2a4 4 0 0 0-7 1zM19 13a7 7 0 0 1-12 3l-2 1v-6h6l-2 2a4 4 0 0 0 7-1z" fill="#50b060" /></Box>
    </RailItem>
    {["1", "5", "15", "30", "60"].map((t) => <RailItem key={t}>{t}</RailItem>)}
    <RailItem><div className="w-[32px] h-[32px] flex items-center justify-center text-[21px] border-l-2 border-t-2 border-[#d0d0d0] bg-[#f8f8f8]">日</div></RailItem>
    {["周", "月", "N", "多", "季", "年"].map((t) => <RailItem key={t}><span className="text-[19px]">{t}</span></RailItem>)}
  </div>
);

const TitleBar = () => (
  <div className="h-[35px] bg-[#f0f0f0] border-b-2 border-[#a8a8a8] flex items-center text-[18px] text-[#303030] whitespace-nowrap shrink-0">
    <div className="w-[190px] flex items-center shrink-0 pl-[5px]">
      <svg width="26" height="26" viewBox="0 0 26 26">
        <rect width="26" height="26" fill="#d82020" />
        <path d="M22 4C16 5 12 8 9 12L13 13 4 22C10 20 16 17 18 12L14 11Z" fill="#fff" />
      </svg>
      <span className="ml-[5px]">通达信金融终端</span>
    </div>
    {["行情", "市场", "资讯", "数据", "专题", "发现", "交易", "行业", "热点", "L1L2"].map((t) => (
      <div key={t} className="w-[72px] text-center shrink-0">{t}</div>
    ))}
    <div className="ml-[262px] text-[#ff2020] text-[19.500px] shrink-0">交易未登录</div>
    <div className="ml-[20px] text-[#ff2020] text-[19.500px] shrink-0">大胜达</div>
    <div className="ml-[236px] flex shrink-0">
      {["功能", "版面", "公式", "选项", "帮助"].map((t) => (
        <div key={t} className="w-[57.600px] text-center">{t}</div>
      ))}
    </div>
    <div className="ml-[6px] h-full border-l border-[#b0b0b0] pl-[4px] w-[125px] flex items-center gap-[8px] shrink-0 text-[#404040]">
      <span className="text-[18px]">10:29:55</span>
      <span>周三</span>
    </div>
    <div className="h-full border-l border-[#b0b0b0] flex-1 flex items-center text-[#303030]">
      <svg width="157" height="24" viewBox="0 0 157 24">
        <path d="M30 5L24 12 30 19" fill="none" stroke="#303030" strokeWidth="2.500" />
        <path d="M58 12H68" stroke="#303030" strokeWidth="3" />
        <path d="M98 8H106V18H98ZM101 8V5H110V14H106" fill="none" stroke="#303030" strokeWidth="2.500" />
        <path d="M137 5L148 19M148 5L137 19" stroke="#303030" strokeWidth="2.500" />
      </svg>
    </div>
  </div>
);

const statusItems: [string, string, string][] = [
  ["w-[53px]", "上证", "text-[#303030] text-[23px]"],
  ["w-[102px]", "3237.16", "text-[#008000] font-bold"],
  ["w-[74px]", "-8.22", "text-[#008000] font-bold"],
  ["w-[88px]", "-0.25%", "text-[#008000] font-bold"],
  ["w-[95px]", "1668亿", "text-[#101010] font-bold"],
  ["w-[53px]", "沪深", "text-[#303030] text-[23px]"],
  ["w-[108px]", "4001.90", "text-[#ff1010] font-bold"],
  ["w-[69px]", "2.39", "text-[#ff1010] font-bold"],
  ["w-[85px]", "0.06%", "text-[#ff1010] font-bold"],
  ["w-[96px]", "1062亿", "text-[#101010] font-bold"],
  ["w-[54px]", "创业", "text-[#303030] text-[23px]"],
  ["w-[108px]", "2378.84", "text-[#ff1010] font-bold"],
  ["w-[69px]", "9.67", "text-[#ff1010] font-bold"],
  ["w-[83px]", "0.41%", "text-[#ff1010] font-bold"],
  ["w-[100px]", "1132亿", "text-[#101010] font-bold"],
];

const StatusBar = () => (
  <div className="h-[35px] bg-[#f4f4f4] flex items-center text-[21px] whitespace-nowrap shrink-0">
    <div className="w-[25px] pl-[2px] shrink-0">
      <div className="w-[20px] h-[24px] rounded-[3px] bg-[#f0b840] border border-[#b08020] flex items-center justify-center">
        <div className="w-[10px] h-[14px] bg-[#f8e8a0]" />
      </div>
    </div>
    {statusItems.map(([w, t, cls], i) => (
      <div key={i} className={`${w} shrink-0 ${cls}`}>{t}</div>
    ))}
    <div className="h-full border-l border-[#b0b0b0] pl-[8px] flex items-center text-[#303030] text-[22px] shrink-0">总成交 <span className="font-bold ml-[8px]">4</span></div>
  </div>
);

const Watermark = () => (
  <div className="absolute left-[1360px] top-[1313px] w-[800px] h-[82px] bg-[#7fa9d9] flex items-center whitespace-nowrap">
    <div className="ml-[15px] w-[285px] text-[56px] leading-none font-bold text-[#180c8c] [font-family:'Noto_Sans_CJK_SC',sans-serif]">公式指标网</div>
    <svg width="84" height="84" viewBox="0 0 84 84" className="ml-[15px] shrink-0">
      <path d="M7 42A35 35 0 0 1 77 42" fill="none" stroke="#d46a50" strokeWidth="8" />
      <path d="M77 42A35 35 0 0 1 42 77" fill="none" stroke="#e8c848" strokeWidth="8" />
      <path d="M30 18H54V32H47V38H58V50H48V60H56V68H30V60H36V50H26V38H37V32H30Z" fill="#e8c848" />
      <circle cx="42" cy="13" r="5" fill="#e8c848" />
      <path d="M33 25H51M31 44H53" stroke="#7fa9d9" strokeWidth="2.500" />
    </svg>
    <div className="ml-[28px] text-[49px] leading-none font-bold text-white [font-family:'DejaVu_Serif',serif]">www.9m8.cn</div>
  </div>
);

const App = () => (
  <div className="relative w-[2160px] h-[1395px] bg-black overflow-hidden flex flex-col [font-family:'Liberation_Sans','Noto_Sans_CJK_SC',sans-serif]">
    <TitleBar />
    <div className="flex h-[1325px] shrink-0">
      <div className="w-[1787px] flex flex-col shrink-0">
        <Toolbar />
        <ChartHeader />
        <div className="relative shrink-0">
          <MainChart />
          <ImeBar />
        </div>
        <VolumeHeader />
        <VolumeChart />
        <Tabs />
      </div>
      <Panel />
      <Rail />
    </div>
    <StatusBar />
    <Watermark />
  </div>
);

export default App;
